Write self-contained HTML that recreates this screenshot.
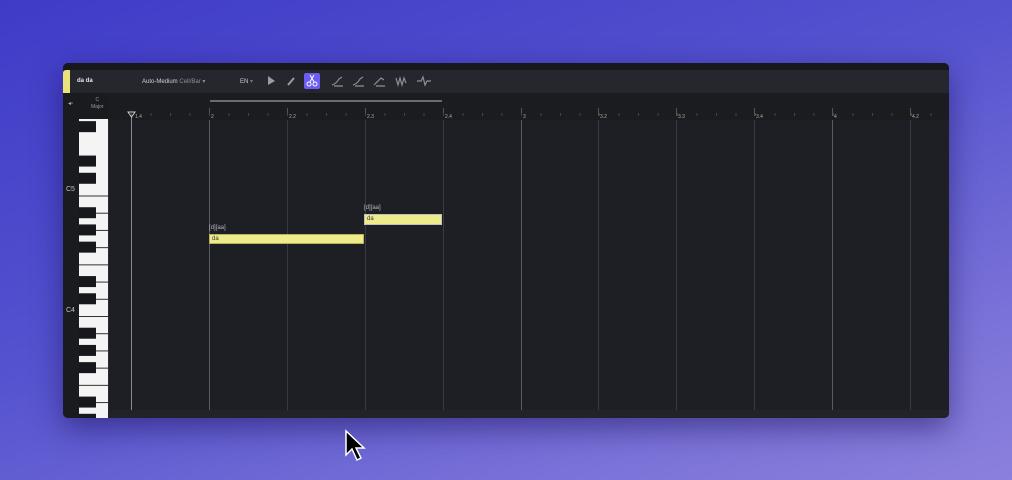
<!DOCTYPE html>
<html><head><meta charset="utf-8"><style>
*{margin:0;padding:0;box-sizing:border-box}
body{width:1012px;height:480px;overflow:hidden;background:linear-gradient(160deg,#3f3bc8 0%,#5553cf 45%,#7a72d8 80%,#8b80dc 100%);font-family:"Liberation Sans",sans-serif;position:relative}
.win{position:absolute;left:63px;top:63px;width:886px;height:355px;background:#1d1e23;border-radius:5px;overflow:hidden;box-shadow:0 10px 30px rgba(20,10,80,.5)}
.t{position:absolute;color:#c9cad0;font-size:6px;white-space:nowrap}
</style></head><body>
<div class="win">
 <div style="position:absolute;left:0;top:0;width:886px;height:7px;background:#17181c"></div>
 <div style="position:absolute;left:0;top:7px;width:886px;height:23px;background:#26272e"></div>
 <div style="position:absolute;left:0;top:7px;width:7px;height:23px;background:#e8e47a;border-radius:3px 0 0 0"></div>
 <div class="t" style="left:14px;top:15px;color:#e8e8ea;font-weight:bold">da da</div>
 <div class="t" style="left:79px;top:15px;color:#d0d0d6">Auto-Medium <span style="color:#8c8d95">Cell/Bar ▾</span></div>
 <div class="t" style="left:177px;top:15px;color:#d0d0d6">EN <span style="color:#777">▾</span></div>
 <svg style="position:absolute;left:0;top:7px" width="886" height="23">
  <path d="M205 6 L212 11 L205 15 Z" fill="#9a9ba3"/>
  <path d="M225 15 L231 8" stroke="#9a9ba3" stroke-width="2"/>
  <rect x="241" y="3" width="16" height="16" rx="2" fill="#6c5cf2"/>
  <g stroke="#fff" stroke-width="1" fill="none"><circle cx="246" cy="14" r="2"/><circle cx="252" cy="14" r="2"/><path d="M247 12 L251 5 M251 12 L247 5"/></g>
  <g stroke="#8e8f97" stroke-width="1.2" fill="none">
   <path d="M269 15 Q273 14 276 9 L279 7 M271 16 H280"/>
   <path d="M290 15 Q294 14 297 9 L300 7 M292 16 H301"/>
   <path d="M311 15 Q315 11 318 8 L321 10 M313 16 H322"/>
   <path d="M333 8 L335 15 L337 8 L339 15 L341 8 L343 13"/>
   <path d="M354 11 H358 L360 7 L362 15 L364 11 H368"/>
  </g>
 </svg>
 <div style="position:absolute;left:0;top:30px;width:45px;height:325px;background:#1a1b1f"></div>
 <div class="t" style="left:5px;top:37px;color:#aaa">◂▫</div>
 <div class="t" style="left:28px;top:34px;color:#9a9ba3;text-align:center;font-size:5px;line-height:7px">C<br>Major</div>
 <div style="position:absolute;left:45px;top:30px;width:841px;height:27px;background:#1b1c20"></div>
 <div style="position:absolute;left:147px;top:37px;width:232px;height:2px;background:#6a6b72"></div>
 <svg id="g" style="position:absolute;left:0;top:0" width="886" height="355"></svg>
 <div class="t" style="left:3px;top:123px;font-size:7px;color:#c0c0c6">C5</div>
 <div class="t" style="left:3px;top:244px;font-size:7px;color:#c0c0c6">C4</div>
 <div class="t" style="left:146px;top:162px;color:#b8b9c0">[d][aa]</div>
 <div style="position:absolute;left:146px;top:171px;width:155px;height:10px;background:#eeec8a;border:1px solid #b5b35e"></div>
 <div class="t" style="left:149px;top:173px;color:#333">da</div>
 <div class="t" style="left:301px;top:142px;color:#b8b9c0">[d][aa]</div>
 <div style="position:absolute;left:301px;top:151px;width:78px;height:11px;background:#eeec8a;border:1px solid #c0c0c0"></div>
 <div class="t" style="left:304px;top:153px;color:#333">da</div>
</div>
<svg style="position:absolute;left:344px;top:429px" width="24" height="36"><path d="M2 2 L2 26 L8 20 L13 31 L17 29 L12 19 L20 19 Z" fill="#000" stroke="#fff" stroke-width="1.5"/></svg>
<script>
var s='',ox=63,oy=63;
function R(x,y,w,h,c){s+='<rect x="'+(x-ox)+'" y="'+(y-oy)+'" width="'+w+'" height="'+h+'" fill="'+c+'"/>';}
R(108,120,841,298,'#1e1f24');
var xs=[209,287,365,443,521,598,676,754,832,910],lab=['2','2.2','2.3','2.4','3','3.2','3.3','3.4','4','4.2'];
xs.forEach(function(x,i){var b=(i%4==0);R(x,120,1,298,b?'#5a5b62':'#3a3b42');R(x,108,1,8,'#555');
s+='<text x="'+(x+2-ox)+'" y="'+(118-oy)+'" font-size="5" fill="#aaa" font-family="Liberation Sans">'+lab[i]+'</text>';});
for(var x=131;x<949;x+=19.5)R(x,113,1,3,'#444');
R(131,116,1,302,'#8a8b92');
s+='<path d="M'+(128-ox)+' '+(112-oy)+' h7 l-3.5 5 z" fill="none" stroke="#ccc"/>';
s+='<text x="'+(135-ox)+'" y="'+(118-oy)+'" font-size="5" fill="#aaa" font-family="Liberation Sans">1.4</text>';
R(79,119,30,299,'#f4f4f4');
var h=120.5/7,base=316;
for(var k=-14;k<8;k++){var y=base-k*h;if(y>119&&y<418)R(79,y,30,1,'#333');}
// black keys
var bl=[1,2,4,5,6];
for(var o=-2;o<2;o++){bl.forEach(function(n){var cy=base-(o*7+n)*h;if(cy>112&&cy<425)R(79,cy-5.5,17,11,'#17181b');});}
R(108,119,1,299,'#2a2b30');
R(108,410,841,8,'#222328');
document.getElementById('g').innerHTML=s;
</script>
</body></html>
